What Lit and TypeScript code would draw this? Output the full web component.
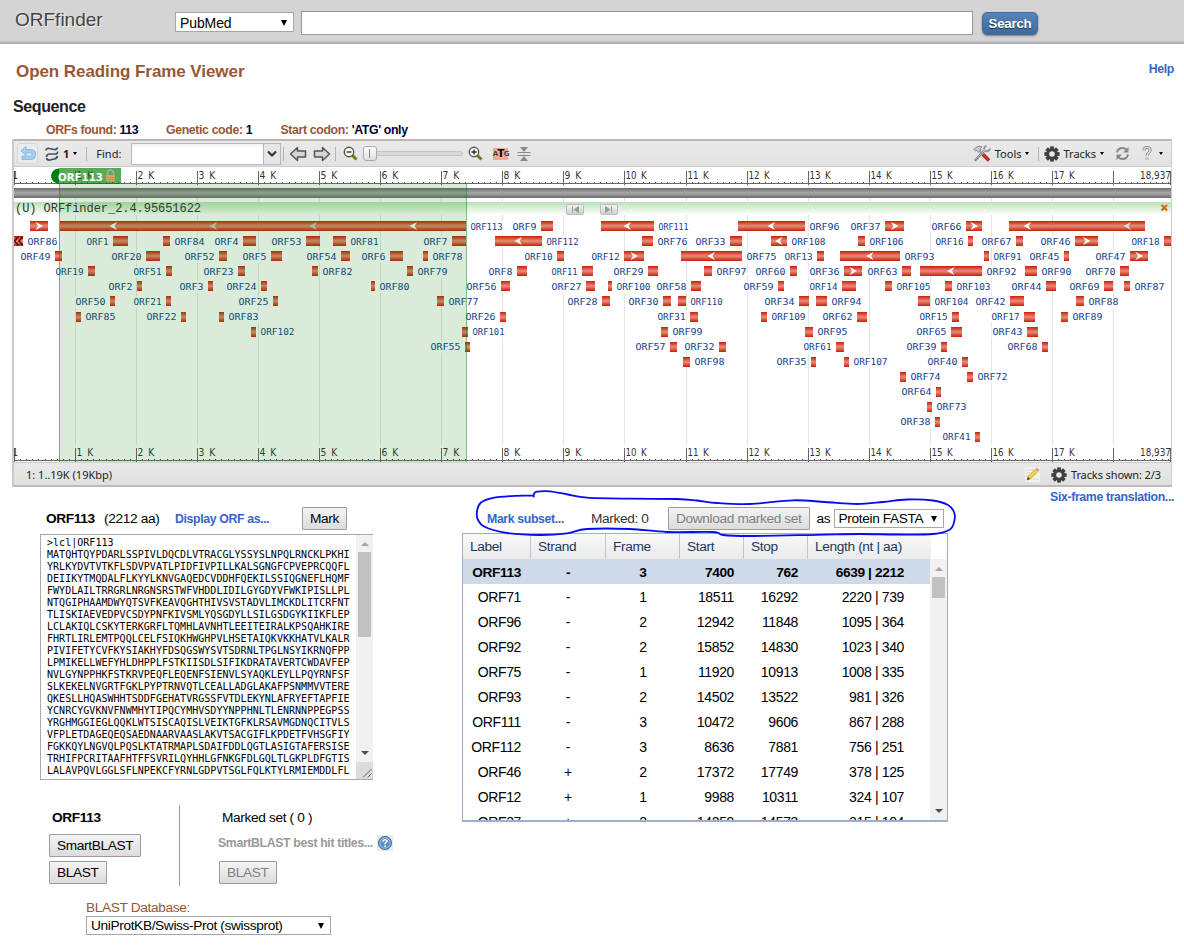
import { LitElement, html, svg, css } from "lit";
import { customElement } from "lit/decorators.js";

type Dir = "<" | ">" | "";
// name, bar start, bar end, label side, strand arrow
type Orf = [string, number, number, "L" | "R", Dir?];

const LANES: Orf[][] = [
  [["", 30, 48, "L", ">"], ["ORF113", 60, 466, "R"], ["ORF9", 541, 553, "L"], ["ORF111", 601, 654, "R", "<"], ["ORF96", 738, 805, "R", "<"], ["ORF37", 885, 904, "L", ">"], ["ORF66", 966, 982, "L", ">"], ["", 1009, 1145, "R"]],
  [["ORF86", 14, 23, "R"], ["ORF1", 113, 128, "L"], ["ORF84", 163, 170, "R"], ["ORF4", 243, 256, "L"], ["ORF53", 306, 320, "L"], ["ORF81", 333, 346, "R"], ["ORF7", 452, 466, "L"], ["ORF112", 495, 542, "R", "<"], ["ORF76", 642, 653, "R"], ["ORF33", 730, 742, "L"], ["ORF108", 771, 787, "R", "<"], ["ORF106", 858, 865, "R"], ["ORF16", 968, 973, "L"], ["ORF67", 1016, 1023, "L"], ["ORF46", 1075, 1098, "L", ">"], ["ORF18", 1164, 1171, "L"]],
  [["ORF49", 55, 62, "L"], ["ORF20", 146, 160, "L"], ["ORF52", 219, 227, "L"], ["ORF5", 271, 282, "L"], ["ORF54", 341, 350, "L"], ["ORF6", 390, 403, "L"], ["ORF78", 423, 428, "R"], ["ORF10", 557, 564, "L"], ["ORF12", 624, 644, "L", ">"], ["ORF75", 681, 742, "R", "<"], ["ORF13", 817, 824, "L"], ["ORF93", 840, 900, "R", "<"], ["ORF91", 984, 989, "R"], ["ORF45", 1064, 1069, "L"], ["ORF47", 1130, 1148, "L", ">"]],
  [["ORF19", 88, 95, "L"], ["ORF51", 166, 172, "L"], ["ORF23", 238, 245, "L"], ["ORF82", 312, 318, "R"], ["ORF79", 407, 413, "R"], ["ORF8", 517, 527, "L"], ["ORF11", 582, 593, "L"], ["ORF29", 648, 658, "L"], ["ORF97", 704, 712, "R"], ["ORF60", 790, 797, "L"], ["ORF36", 844, 862, "L", ">"], ["ORF63", 902, 911, "L"], ["ORF92", 920, 982, "R", "<"], ["ORF90", 1025, 1037, "R"], ["ORF70", 1120, 1129, "L"]],
  [["ORF2", 137, 142, "L"], ["ORF3", 208, 213, "L"], ["ORF24", 261, 267, "L"], ["ORF80", 371, 375, "R"], ["ORF56", 501, 510, "L"], ["ORF27", 586, 595, "L"], ["ORF100", 608, 612, "R"], ["ORF58", 691, 701, "L"], ["ORF59", 778, 784, "L"], ["ORF14", 842, 856, "L"], ["ORF105", 885, 892, "R"], ["ORF103", 945, 952, "R"], ["ORF44", 1046, 1056, "L"], ["ORF69", 1104, 1113, "L"], ["ORF87", 1124, 1130, "R"]],
  [["ORF50", 110, 115, "L"], ["ORF21", 166, 171, "L"], ["ORF25", 273, 278, "L"], ["ORF77", 437, 444, "R"], ["ORF28", 602, 610, "L"], ["ORF30", 663, 671, "L"], ["ORF110", 678, 686, "R"], ["ORF34", 799, 809, "L"], ["ORF94", 816, 827, "R"], ["ORF104", 918, 930, "R"], ["ORF42", 1010, 1024, "L"], ["ORF88", 1076, 1084, "R"]],
  [["ORF85", 76, 81, "R"], ["ORF22", 181, 186, "L"], ["ORF83", 219, 224, "R"], ["ORF26", 500, 506, "L"], ["ORF31", 690, 698, "L"], ["ORF109", 761, 767, "R"], ["ORF62", 857, 867, "L"], ["ORF15", 952, 959, "L"], ["ORF17", 1024, 1035, "L"], ["ORF89", 1061, 1068, "R"]],
  [["ORF102", 251, 256, "R"], ["ORF101", 462, 468, "R"], ["ORF99", 661, 668, "R"], ["ORF95", 805, 813, "R"], ["ORF65", 951, 962, "L"], ["ORF43", 1027, 1038, "L"]],
  [["ORF55", 465, 470, "L"], ["ORF57", 670, 677, "L"], ["ORF32", 719, 726, "L"], ["ORF61", 836, 844, "L"], ["ORF39", 941, 947, "L"], ["ORF68", 1042, 1048, "L"]],
  [["ORF98", 683, 690, "R"], ["ORF35", 811, 816, "L"], ["ORF107", 844, 849, "R"], ["ORF40", 962, 968, "L"]],
  [["ORF74", 900, 906, "R"], ["ORF72", 967, 973, "R"]],
  [["ORF64", 936, 941, "L"]],
  [["ORF73", 927, 932, "R"]],
  [["ORF38", 935, 940, "L"]],
  [["ORF41", 975, 980, "L"]],
];

const KILO = [75, 136, 197, 258, 319, 380, 441, 502, 563, 624, 686, 747, 808, 869, 930, 991, 1052, 1113];

const SEQUENCE = `>lcl|ORF113
MATQHTQYPDARLSSPIVLDQCDLVTRACGLYSSYSLNPQLRNCKLPKHI
YRLKYDVTVTKFLSDVPVATLPIDFIVPILLKALSGNGFCPVEPRCQQFL
DEIIKYTMQDALFLKYYLKNVGAQEDCVDDHFQEKILSSIQGNEFLHQMF
FWYDLAILTRRGRLNRGNSRSTWFVHDDLIDILGYGDYVFWKIPISLLPL
NTQGIPHAAMDWYQTSVFKEAVQGHTHIVSVSTADVLIMCKDLITCRFNT
TLISKIAEVEDPVCSDYPNFKIVSMLYQSGDYLLSILGSDGYKIIKFLEP
LCLAKIQLCSKYTERKGRFLTQMHLAVNHTLEEITEIRALKPSQAHKIRE
FHRTLIRLEMTPQQLCELFSIQKHWGHPVLHSETAIQKVKKHATVLKALR
PIVIFETYCVFKYSIAKHYFDSQGSWYSVTSDRNLTPGLNSYIKRNQFPP
LPMIKELLWEFYHLDHPPLFSTKIISDLSIFIKDRATAVERTCWDAVFEP
NVLGYNPPHKFSTKRVPEQFLEQENFSIENVLSYAQKLEYLLPQYRNFSF
SLKEKELNVGRTFGKLPYPTRNVQTLCEALLADGLAKAFPSNMMVVTERE
QKESLLHQASWHHTSDDFGEHATVRGSSFVTDLEKYNLAFRYEFTAPFIE
YCNRCYGVKNVFNWMHYTIPQCYMHVSDYYNPPHNLTLENRNNPPEGPSS
YRGHMGGIEGLQQKLWTSISCAQISLVEIKTGFKLRSAVMGDNQCITVLS
VFPLETDAGEQEQSAEDNAARVAASLAKVTSACGIFLKPDETFVHSGFIY
FGKKQYLNGVQLPQSLKTATRMAPLSDAIFDDLQGTLASIGTAFERSISE
TRHIFPCRITAAFHTFFSVRILQYHHLGFNKGFDLGQLTLGKPLDFGTIS
LALAVPQVLGGLSFLNPEKCFYRNLGDPVTSGLFQLKTYLRMIEMDDLFL`;

const ROWS = [
  ["ORF113", "-", "3", "7400", "762", "6639 | 2212"],
  ["ORF71", "-", "1", "18511", "16292", "2220 | 739"],
  ["ORF96", "-", "2", "12942", "11848", "1095 | 364"],
  ["ORF92", "-", "2", "15852", "14830", "1023 | 340"],
  ["ORF75", "-", "1", "11920", "10913", "1008 | 335"],
  ["ORF93", "-", "2", "14502", "13522", "981 | 326"],
  ["ORF111", "-", "3", "10472", "9606", "867 | 288"],
  ["ORF112", "-", "3", "8636", "7881", "756 | 251"],
  ["ORF46", "+", "2", "17372", "17749", "378 | 125"],
  ["ORF12", "+", "1", "9988", "10311", "324 | 107"],
  ["ORF37", "+", "2", "14259", "14573", "315 | 104"],
];

const OUTLINE: [number, number][] = [
  [533.7, 497.3], [534, 494], [537, 491.7], [550, 491.3], [568, 494.5], [587, 497.7], [630, 498.7], [677, 499], [697, 500.5], [717, 503],
  [750, 504], [793, 500.3], [825, 502], [857, 504], [883, 502], [907, 499.5], [933, 500.5], [948, 505], [954, 512], [954.5, 520], [950, 529.5],
  [933, 534], [897, 534.5], [860, 534], [817, 534.8], [750, 536], [723, 535], [713, 532], [667, 532], [630, 529], [587, 529], [567, 533.3],
  [540, 535], [507, 533], [485, 527], [478, 520], [477, 511], [481, 502.5], [493, 497.8], [515, 495.8], [533, 495.7],
];

function smoothPath(p: [number, number][]): string {
  let d = `M${p[0][0]} ${p[0][1]}`;
  for (let i = 0; i < p.length - 1; i++) {
    const a = p[Math.max(0, i - 1)], b = p[i], c = p[i + 1], e = p[Math.min(p.length - 1, i + 2)];
    d += `C${b[0] + (c[0] - a[0]) / 6} ${b[1] + (c[1] - a[1]) / 6} ${c[0] - (e[0] - b[0]) / 6} ${c[1] - (e[1] - b[1]) / 6} ${c[0]} ${c[1]}`;
  }
  return d;
}

@customElement("orf-tracks")
class OrfTracks extends LitElement {
  static styles = css`
    :host { display: block; height: 295px; }
    svg { display: block; }
    .lbl { font: 9px "DejaVu Sans Mono", monospace; fill: #14428c; }
    .scale { font: 9.7px "DejaVu Sans", sans-serif; fill: #333; word-spacing: 2px; }
    .title { font: 12px "Liberation Mono", monospace; fill: #333; }
    .pin { font: bold 11px "DejaVu Sans", sans-serif; fill: #fff; }
  `;

  private arrow(x: number, y: number, dir: Dir, fill = "#fff") {
    const s = dir === "<" ? 1 : -1;
    return svg`<path d="M${x - 4 * s} ${y}L${x + 3.5 * s} ${y - 4}L${x + 1 * s} ${y}L${x + 3.5 * s} ${y + 4}Z" fill=${fill}/>`;
  }

  private orf([name, x1, x2, side, dir]: Orf, lane: number) {
    const y = lane < 6 ? 221 + lane * 15 : 222 + lane * 15;
    const w = name.length * 6 - (name.split("1").length - 1) * 2;
    const tx = side === "L" ? x1 - 4.5 - w : x2 + 4.5;
    const base = 230 + lane * 15;
    return svg`
      <rect x=${x1} y=${y} width=${x2 - x1} height="10" fill="url(#bar)"/>
      ${dir ? this.arrow((x1 + x2) / 2, y + 5, dir) : ""}
      ${name ? svg`<rect x=${tx - 1} y=${base - 9} width=${w + 2} height="12" fill="#fff" opacity=".85"/>
        <text class="lbl" x=${tx} y=${base} textLength=${w} lengthAdjust="spacingAndGlyphs">${name}</text>` : ""}`;
  }

  private ruler(line: number) {
    const dots = [];
    const edges = [14, ...KILO, 1174];
    for (let k = 0; k < edges.length - 1; k++)
      for (let i = 1; i < 10; i++) {
        const x = Math.round(edges[k] + ((edges[k + 1] - edges[k]) * i) / 10);
        if (x < 1171) dots.push(svg`<rect x=${x} y=${line - 1} width="1" height="1" fill="#555"/>`);
      }
    return svg`
      <rect x="14" y=${line} width="1157" height="1" fill="#666"/>
      ${dots}
      <rect x="14" y=${line - 12} width="1" height="14" fill="#666"/>
      <rect x="1170" y=${line - 12} width="1" height="14" fill="#666"/>
      <text class="scale" x="12" y=${line - 4}>1</text>
      ${KILO.map((x, i) => svg`
        <rect x=${x} y=${line - 12} width="1" height="14" fill="#666"/>
        ${i < 17 ? svg`<text class="scale" x=${x + 1.5} y=${line - 4} textLength=${i < 9 ? 16.7 : 21.3} lengthAdjust="spacingAndGlyphs">${i + 1} K</text>` : ""}`)}
      <text class="scale" x="1140" y=${line - 4} textLength="31" lengthAdjust="spacingAndGlyphs">18,937</text>`;
  }

  render() {
    return html`<svg width="1157" height="295" viewBox="14 167 1157 295">
      <defs>
        <linearGradient id="bar" x1="0" y1="0" x2="0" y2="1">
          <stop offset="0" stop-color="#c81e04"/><stop offset=".5" stop-color="#e98c7c"/><stop offset="1" stop-color="#c81e04"/>
        </linearGradient>
        <linearGradient id="seq" x1="0" y1="0" x2="0" y2="1">
          <stop offset="0" stop-color="#6c6c6c"/><stop offset=".5" stop-color="#a9a9a9"/><stop offset="1" stop-color="#6c6c6c"/>
        </linearGradient>
        <linearGradient id="head" x1="0" y1="0" x2="0" y2="1">
          <stop offset="0" stop-color="#b9e2b4"/><stop offset="1" stop-color="#fff"/>
        </linearGradient>
        <linearGradient id="nav" x1="0" y1="0" x2="0" y2="1">
          <stop offset="0" stop-color="#f4f4f4"/><stop offset="1" stop-color="#cfcfcf"/>
        </linearGradient>
      </defs>
      <rect x="14" y="167" width="1157" height="295" fill="#fff"/>
      ${KILO.map((x) => svg`<rect x=${x} y="185" width="1" height="260" fill="#e4e4e4"/>`)}
      ${this.ruler(183)}
      <rect x="14" y="188" width="1157" height="10" fill="url(#seq)"/>
      <rect x="14" y="202" width="1157" height="13" fill="url(#head)"/>
      <text class="title" x="15" y="212" textLength="186">(U) ORFfinder_2.4.95651622</text>
      ${LANES.map((lane, i) => lane.map((o) => this.orf(o, i)))}
      <path d="M18.5 236.5l-4 4.5l4 4.500M23 236.500l-4 4.500l4 4.500" fill="none" stroke="#4a1008" stroke-width="1.5"/>
      ${this.arrow(113.5, 226, "<")}
      ${this.arrow(213.5, 226, "<", "#c9c9bd")}
      ${this.arrow(313.5, 226, "<", "#c9c9bd")}
      ${this.arrow(413.5, 226, "<")}
      ${this.arrow(1027.5, 226, "<")}
      ${this.arrow(1127.5, 226, "<", "#ddd")}
      ${this.ruler(460)}
      <rect x="59" y="184" width="407" height="278" fill="#008000" opacity=".15"/>
      <rect x="59" y="184" width="1" height="278" fill="#008000" opacity=".5"/>
      <rect x="466" y="184" width="1" height="278" fill="#008000" opacity=".5"/>
      <path d="M59 168.5a8 7.5 0 0 0 0 15Z" fill="#008000"/>
      <rect x="59" y="168" width="62" height="16" fill="#008000" opacity=".66"/>
      <text class="pin" x="58" y="181" textLength="45" lengthAdjust="spacingAndGlyphs">ORF113</text>
      <path d="M107.5 175v-2a3 3 0 0 1 6 0v2" fill="none" stroke="#ababab" stroke-width="1.6"/>
      <rect x="106" y="175" width="9" height="6.5" rx="1" fill="#d9a566"/>
      <path d="M106 177.5h9M106 179.5h9" stroke="#b98645" stroke-width=".7"/>
      <rect x="566.5" y="204.5" width="17" height="10" rx="1.5" fill="url(#nav)" stroke="#bbb"/>
      <path d="M572.5 206.5v6M578.5 206.5l-4 3l4 3Z" fill="#999" stroke="#999"/>
      <rect x="600.5" y="204.5" width="17" height="10" rx="1.5" fill="url(#nav)" stroke="#bbb"/>
      <path d="M611.5 206.5v6M605.5 206.5l4 3l-4 3Z" fill="#999" stroke="#999"/>
      <path d="M1161.5 205l5.5 5.5M1167 205l-5.5 5.5" stroke="#d2691e" stroke-width="2.2"/>
    </svg>`;
  }
}

const gear = html`<svg class="gear" width="16" height="16" viewBox="-8 -8 16 16">
  ${[0, 45, 90, 135].map((a) => svg`<rect x="-1.9" y="-7.6" width="3.8" height="15.2" fill="#3f3f3f" transform="rotate(${a})"/>`)}
  <circle r="4.3" fill="#e8e8e8" stroke="#3f3f3f" stroke-width="3"/></svg>`;

const lens = (plus: boolean) => html`<svg width="15" height="15" viewBox="0 0 15 15">
  <path d="M9 9l4.5 4.5" stroke="#7d7420" stroke-width="3"/>
  <circle cx="6" cy="6" r="4.7" fill="#fdfdf2" stroke="#555" stroke-width="1.4"/>
  <path d=${plus ? "M3.5 6h5M6 3.5v5" : "M3.5 6h5"} stroke="#222" stroke-width="1.3"/></svg>`;

const fatArrow = (flip: boolean) => html`<svg width="18" height="16" viewBox="0 0 18 16">
  <path transform=${flip ? "translate(18 0) scale(-1 1)" : ""} d="M1.5 8L8.5 1.5V5H16.5V11H8.5V14.5Z" fill="#d5d5d5" stroke="#555" stroke-width="1.5" stroke-linejoin="round"/></svg>`;

@customElement("app-root")
class AppRoot extends LitElement {
  static styles = css`
    :host { display: block; position: relative; width: 1184px; height: 951px; overflow: hidden; background: #fff;
      font: 13.7px/16px "Liberation Sans", Arial, sans-serif; letter-spacing: -.36px; color: #000; }
    * { box-sizing: border-box; }
    svg { display: block; flex: none; }
    .top { height: 44px; display: flex; align-items: flex-start; background: linear-gradient(#d4d4d4 0 40px, #c4c4c4 42px, #a8a8a8 43px, #b4b4b4); }
    .brand { width: 160px; padding: 9px 0 0 15px; font-size: 19px; line-height: 22px; letter-spacing: 0; color: #444; text-shadow: 1px 1px 0 #f2f2f2; margin-right: 1px; }
    .select { display: flex; align-items: center; justify-content: space-between; border: 1px solid #a6a6a6; background: #fff; padding: 0 6px 0 4px; white-space: nowrap; }
    .select::after { content: ""; border: 3.5px solid transparent; border-top: 6px solid #000; border-bottom: 0; }
    .select.db { width: 119px; height: 20px; margin: 12px 0 0 14px; padding-top: 1px; font-size: 14px; letter-spacing: -.1px; }
    .query { width: 672px; height: 24px; border: 1px solid #999; background: #fff; margin: 11px 0 0 7px; }
    .search { width: 56px; height: 23px; margin: 12px 0 0 9px; border-radius: 5px; background: linear-gradient(#5585b9, #41699c); border: 1px solid #42699b;
      box-shadow: 0 1px 2px #7a7a7a; color: #fff; font: bold 13.3px/21px "Liberation Sans", sans-serif; letter-spacing: -.25px; text-align: center; text-shadow: 0 1px 1px #234; }
    .b { font-weight: bold; }
    .link { font: bold 12.3px/16px "Liberation Sans", sans-serif; color: #36c; white-space: nowrap; }
    .headline { display: flex; justify-content: space-between; padding: 17px 10px 0 16px; height: 53px; }
    .headline h1 { margin: 1px 0 0; font-size: 17px; line-height: 20px; letter-spacing: -.07px; color: #985735; }
    h2 { margin: 0 0 0 13px; height: 26px; font-size: 16px; line-height: 19px; letter-spacing: -.4px; color: #222; }
    .facts { display: flex; height: 16px; padding-left: 46px; font: bold 12.3px/15px "Liberation Sans", sans-serif; color: #985735; white-space: pre; }
    .facts span { color: #003; }
    .facts div { width: 120px; }
    .facts div + div { width: 114.5px; }
    .viewer { width: 1160px; margin-left: 12px; border: solid #cbcbcb; border-width: 0 1px 0 2px; letter-spacing: 0; }
    .bar { height: 28px; border-top: 2px solid #c3b4b4; border-bottom: 1px solid #ccc; display: flex; align-items: center; background: linear-gradient(#eaeaea, #e2e2e2);
      font: 11px/14px "Noto Sans", sans-serif; color: #222; }
    .undo { width: 21px; height: 21px; border: 1px solid #d8d8d8; border-radius: 3px; background: #ebebeb; margin: 0 7px 0 3px; padding: 2px; }
    .one-seq { margin: 0 4px 0 4px; }
    .caret { border: 2.7px solid transparent; border-top: 3.6px solid #000; border-bottom: 0; flex: none; }
    .sep { width: 1px; height: 14px; background: #b9b3a6; flex: none; margin: 0 9px; }
    .sep.nav { margin: 0 5px 0 2px; }
    .sep.zoom { margin: 0 7px 0 4px; }
    .sep.menu { margin: 0 5px 0 9px; }
    .arrows { display: flex; gap: 6px; }
    .combo { width: 150px; height: 22px; display: flex; border: 1px solid #b1b6c9; background: linear-gradient(#f0f0f0, #fff 4px); margin-left: 10px; }
    .combo div { margin-left: auto; width: 17px; border-left: 1px solid #b1b6c9; background: #e6e6e6; padding: 6px 0 0 3px; }
    .slider { width: 100px; height: 15px; display: flex; align-items: center; margin: 0 5px; }
    .thumb { width: 14px; height: 15px; border: 1px solid #aaa; border-radius: 3px; background: linear-gradient(#fff, #ddd); padding: 2px 5px; }
    .thumb::after { content: ""; display: block; width: 1px; height: 9px; background: #888; }
    .groove { flex: 1; height: 5px; border: 1px solid #c4c4c4; border-left: 0; background: #d9d9d9; border-radius: 0 3px 3px 0; }
    .atg { width: 15px; height: 12px; background: #f0a890; font: bold 7px/12px "DejaVu Sans", sans-serif; color: #444; display: flex; justify-content: center; margin: 0 9px 0 10px; letter-spacing: -.6px; }
    .atg b { font-size: 10px; color: #000; }
    .right { margin-left: auto; display: flex; align-items: center; }
    .tools-text { margin: 0 3px 0 4px; }
    .tracks-text { margin: 0 4px; }
    .refresh { margin: 0 12px 0 11px; }
    .help-caret { margin: 0 8px 0 7px; }
    .foot { height: 25px; display: flex; align-items: center; justify-content: space-between; border: solid #ccc; border-width: 1px 0 2px; border-bottom-color: #c1b7b7;
      background: linear-gradient(#e9e9e9, #e0e0e0); font: 11px/14px "Noto Sans", sans-serif; padding: 1px 10px 0 12px; color: #222; }
    .foot div { display: flex; align-items: center; }
    .shown { margin-left: 4px; letter-spacing: -.1px; }
    .pencil { width: 15px; height: 15px; background: #f1f1ef; margin-right: 11px; }
    .six { height: 19px; display: flex; justify-content: flex-end; padding: 2px 10px 0 0; }
    .lower { display: flex; }
    .left { width: 422px; margin-left: 40px; }
    .bhead { height: 28px; display: flex; align-items: center; padding: 0 0 3px 6px; }
    .bhead .b { width: 58px; }
    .bhead .aa { width: 71px; }
    .bhead .link { width: 127px; }
    .btn { height: 23px; border: 1px solid #9b9b9b; border-radius: 1px; background: linear-gradient(#f4f4f4, #dcdcdc); padding: 0 7px; line-height: 22px; white-space: nowrap; }
    .btn.off { color: #808080; }
    .fasta { width: 333px; height: 246px; border: 1px solid #a9a9a9; border-right: 0; display: flex; }
    pre { margin: 0; padding: 2px 0 0 6px; flex: 1; font: 10px/12px "DejaVu Sans Mono", monospace; letter-spacing: .03px; overflow: hidden; height: 244px; }
    .scroll { width: 17px; background: #f1f1f1; display: flex; flex-direction: column; align-items: center; flex: none; }
    .up { border: 4px solid transparent; border-top: 0; border-bottom: 4px solid #a3a3a3; margin: 7px 0 6px; }
    .knob { width: 13px; background: #c1c1c1; height: 85px; }
    .down { border: 4px solid transparent; border-bottom: 0; border-top: 4px solid #505050; margin: auto 0 7px; }
    .grip { width: 17px; height: 17px; background: #dcdcdc; }
    .blast { display: flex; margin-top: 25px; height: 81px; }
    .one { width: 140px; border-right: 1px solid #999; padding: 5px 0 0 9px; display: flex; flex-direction: column; align-items: flex-start; }
    .one .b { padding-left: 3px; height: 24px; }
    .one .btn + .btn { margin-top: 4px; }
    .set { padding: 5px 0 0 39px; display: flex; flex-direction: column; align-items: flex-start; }
    .set .m { padding-left: 3px; height: 25px; }
    .hit { display: flex; height: 26px; align-items: flex-start; margin-left: -1px; font: bold 12.3px/17px "Liberation Sans", sans-serif; color: #999; white-space: nowrap; }
    .hit svg { margin-left: 4px; }
    .dbrow { margin: 14px 0 0 46px; color: #985735; }
    .dbrow .select { width: 245px; height: 19px; color: #000; }
    .tools { height: 27px; display: flex; align-items: center; padding: 0 0 2px 25px; }
    .tools .link { width: 104px; }
    .marked { width: 77px; color: #333; }
    .as { width: 24px; padding-left: 7px; }
    .tools .select { width: 110px; height: 19px; }
    .grid { width: 486px; height: 289px; border: 1px solid #99b1cc; border-bottom-width: 2px; display: flex; flex-direction: column; overflow: hidden; }
    .ghead { flex: none; height: 25px; width: 468px; display: grid; grid-template-columns: 68px 75px 74px 64px 64px 1fr; background: linear-gradient(#f9f9f9, #eaeaea); color: #1e395b; line-height: 26px; }
    .ghead div { padding-left: 7px; border-right: 1px solid #c5c5c5; }
    .ghead div:last-child { border: 0; }
    .gbody { flex: 1; display: flex; min-height: 0; }
    .rows { width: 467px; overflow: hidden; }
    .row { height: 25px; display: grid; grid-template-columns: 58px 94px 56px 63px 64px 106px; font-size: 14px; line-height: 27px; text-align: right; }
    .row div:nth-child(2), .row div:nth-child(3) { text-align: center; }
    .row.sel { background: #ced9e9; font-weight: bold; font-size: 13.7px; }
    .gbody .knob { height: 21px; margin-top: 0; }
    .gbody .up { margin-top: 8px; }
    .ink { position: absolute; left: 0; top: 0; pointer-events: none; }
  `;

  render() {
    return html`
      <div class="top">
        <div class="brand">ORFfinder</div>
        <div class="select db">PubMed</div>
        <div class="query"></div>
        <div class="search">Search</div>
      </div>
      <div class="headline"><h1>Open Reading Frame Viewer</h1><div class="link">Help</div></div>
      <h2>Sequence</h2>
      <div class="facts"><div>ORFs found: <span>113</span></div><div>Genetic code: <span>1</span></div><div>Start codon: <span>'ATG' only</span></div></div>
      <div class="viewer">
        <div class="bar">
          <div class="undo"><svg width="16" height="15" viewBox="0 0 16 15"><path d="M6 .5L1 5l5 4.500V7h4.500q1.500 0 1.500 1.500T10.500 10H2v3.500h9q4.500 0 4.500-5T11 3.500H6Z" fill="#a5cdf0" stroke="#7fb0de" stroke-width=".8"/></svg></div>
          <svg width="14" height="16" viewBox="0 0 14 16"><path d="M1 4.500Q1 2 4.500 2.500L9 3.500Q12 4 12.500 1.500M12.500 5.500Q13 8 10 8L5 8Q1.500 8 1.500 11M1.500 12Q2 14.500 5 14L9 13Q12 12.500 12.500 10" fill="none" stroke="#3d5568" stroke-width="1.7"/></svg>
          <b class="one-seq">1</b><div class="caret"></div>
          <div class="sep"></div><span>Find:</span>
          <div class="combo"><div><svg width="10" height="8" viewBox="0 0 10 8"><path d="M1 1.500L5 5.500L9 1.500" fill="none" stroke="#333" stroke-width="2.200"/></svg></div></div>
          <div class="sep nav"></div>
          <div class="arrows">${fatArrow(false)}${fatArrow(true)}</div>
          <div class="sep zoom"></div>
          ${lens(false)}
          <div class="slider"><div class="thumb"></div><div class="groove"></div></div>
          ${lens(true)}
          <div class="atg">A<b>T</b>G</div>
          <svg width="14" height="16" viewBox="0 0 14 16"><path d="M3 1h8L7 6ZM3 15h8L7 10Z" fill="#888"/><path d="M.5 6.500h13M.5 9.500h13" stroke="#888"/></svg>
          <div class="right">
            <svg width="18" height="17" viewBox="0 0 18 17"><path d="M2 15.500L11 6" stroke="#666" stroke-width="2.200"/><path d="M2.500 14.800L11 6" stroke="#eee" stroke-width=".8"/><path d="M1 4.500L3.500 2Q6 .5 9 2L7.500 3.500L8 5L5.500 7L3.500 5.500L2.500 6Z" fill="#ccc" stroke="#777" stroke-width=".9"/><path d="M6.500 6L10 9.500" stroke="#999" stroke-width="2"/><path d="M10 9.500l6 6" stroke="#8c1414" stroke-width="3.400"/><path d="M10.200 9.700l5.500 5.500" stroke="#e02828" stroke-width="2.200"/><path d="M11.500 5.500Q10 2 13.500 1M12 6Q16 7 17 3.500" fill="none" stroke="#999" stroke-width="1.900"/></svg>
            <span class="tools-text">Tools</span><div class="caret"></div>
            <div class="sep menu"></div>${gear}
            <span class="tracks-text">Tracks</span><div class="caret"></div>
            <svg class="refresh" width="15" height="15" viewBox="0 0 15 15"><path d="M2 6.500Q3 2 7.500 2Q10.500 2 12 4.500M13 8.500Q12 13 7.500 13Q4.500 13 3 10.500" fill="none" stroke="#888" stroke-width="2"/><path d="M13.500 1v5.500H8ZM1.500 14V8.500H7Z" fill="#888"/></svg>
            <svg width="10" height="15" viewBox="0 0 10 15"><path d="M1.800 4.500Q1.800 1.500 5 1.500T8.200 4.300Q8.200 6 6.500 7Q5 8 5 9.800M5 11.800v2" fill="none" stroke="#888" stroke-width="2.800"/><path d="M1.800 4.500Q1.800 1.500 5 1.500T8.200 4.300Q8.200 6 6.500 7Q5 8 5 9.800M5 11.800v2" fill="none" stroke="#f2f2f2" stroke-width="1.200"/></svg>
            <div class="caret help-caret"></div>
          </div>
        </div>
        <orf-tracks></orf-tracks>
        <div class="foot"><span>1: 1..19K (19Kbp)</span>
          <div><svg class="pencil" viewBox="0 0 15 15"><path d="M1 3h9M1 6h7M1 9h5M8 12h6" stroke="#d4d4d0"/><path d="M2 13l1-3.500L10.500 2l2.500 2.500L5.500 12Z" fill="#f2d24c" stroke="#b99a3a" stroke-width=".7"/><path d="M2 13l1-3 2 2Z" fill="#333"/><path d="M10.500 2l2.500 2.500L14.500 3L12 .5Z" fill="#e49a8a"/></svg>
          ${gear}<span class="shown">Tracks shown: 2/3</span></div></div>
      </div>
      <div class="six"><span class="link">Six-frame translation...</span></div>
      <div class="lower">
        <div class="left">
          <div class="bhead"><span class="b">ORF113</span><span class="aa">(2212 aa)</span><span class="link">Display ORF as...</span><div class="btn">Mark</div></div>
          <div class="fasta"><pre>${SEQUENCE}</pre><div class="scroll"><div class="up"></div><div class="knob"></div><div class="down"></div>
            <svg class="grip" viewBox="0 0 17 17"><path d="M7 15.500L15.500 7M11.500 15.500L15.500 11.500" stroke="#666"/></svg></div></div>
          <div class="blast">
            <div class="one"><div class="b">ORF113</div><div class="btn">SmartBLAST</div><div class="btn">BLAST</div></div>
            <div class="set"><div class="m">Marked set ( 0 )</div>
              <div class="hit">SmartBLAST best hit titles...<svg width="16" height="16" viewBox="0 0 16 16"><rect width="16" height="16" fill="#e9eaec"/><circle cx="8" cy="8" r="6.600" fill="#5f8fc6" stroke="#4a76ac"/><circle cx="8" cy="8" r="5.200" fill="none" stroke="#a8c6e6" stroke-width=".8"/><path d="M6 6.500Q6 4.700 8 4.700T10 6.300Q10 7.200 8 8.400V9.300M8 10.400v1.500" fill="none" stroke="#fff" stroke-width="1.500"/></svg></div>
              <div class="btn off">BLAST</div></div>
          </div>
          <div class="dbrow">BLAST Database:<div class="select">UniProtKB/Swiss-Prot (swissprot)</div></div>
        </div>
        <div>
          <div class="tools"><span class="link">Mark subset...</span><span class="marked">Marked: 0</span><div class="btn off">Download marked set</div><span class="as">as</span>
            <div class="select">Protein FASTA</div></div>
          <div class="grid">
            <div class="ghead"><div>Label</div><div>Strand</div><div>Frame</div><div>Start</div><div>Stop</div><div>Length (nt | aa)</div></div>
            <div class="gbody"><div class="rows">${ROWS.map((r, i) => html`<div class="row ${i ? "" : "sel"}">${r.map((c) => html`<div>${c}</div>`)}</div>`)}</div>
              <div class="scroll"><div class="up"></div><div class="knob"></div><div class="down"></div></div></div>
          </div>
        </div>
      </div>
      <svg class="ink" width="1184" height="951"><path d=${smoothPath(OUTLINE)} fill="none" stroke="#0a0af0" stroke-width="1.800"/></svg>`;
  }
}
